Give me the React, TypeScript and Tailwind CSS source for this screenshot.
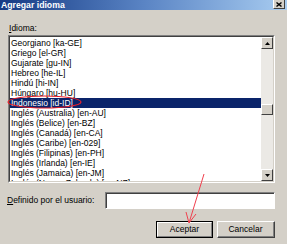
import React from 'react';

// Classic Windows "Agregar idioma" dialog, cropped screenshot with red annotations.

const languages = [
  'Georgiano [ka-GE]',
  'Griego [el-GR]',
  'Gujarate [gu-IN]',
  'Hebreo [he-IL]',
  'Hindú [hi-IN]',
  'Húngaro [hu-HU]',
  'Indonesio [id-ID]',
  'Inglés (Australia) [en-AU]',
  'Inglés (Belice) [en-BZ]',
  'Inglés (Canadá) [en-CA]',
  'Inglés (Caribe) [en-029]',
  'Inglés (Filipinas) [en-PH]',
  'Inglés (Irlanda) [en-IE]',
  'Inglés (Jamaica) [en-JM]',
  'Inglés (Nueva Zelanda) [en-NZ]',
];

const SELECTED = 'Indonesio [id-ID]';

const ScrollButton: React.FC<{ up?: boolean }> = ({ up }) => (
  <div className="h-[12px] w-[12px] shrink-0 bg-[#d4d0c8] border-t border-l border-t-white border-l-white border-r border-b border-r-[#404040] border-b-[#404040] flex items-center justify-center">
    <svg width="5" height="3" viewBox="0 0 5 3">
      {up ? <polygon points="2.5,0 5,3 0,3" fill="#000" /> : <polygon points="0,0 5,0 2.5,3" fill="#000" />}
    </svg>
  </div>
);

const App: React.FC = () => {
  return (
    <div className="relative w-[287px] h-[244px] overflow-hidden bg-[#d4d0c8] flex flex-col font-['Liberation_Sans',Arial,sans-serif] text-[8.5px] text-black">
      {/* title bar */}
      <div className="h-[10px] shrink-0 flex items-center justify-between pl-[1px] pr-[2px] bg-gradient-to-r from-[#163a84] via-[#5a84c4] to-[#a8ccf0]">
        <span className="font-bold text-white text-[8.7px] leading-none">Agregar idioma</span>
        <div className="h-[9px] w-[12px] self-start bg-[#d4d0c8] border-r border-b border-r-[#404040] border-b-[#404040] border-l border-l-white flex items-center justify-center">
          <svg width="6" height="5" viewBox="0 0 6 5">
            <path d="M0.5 0.5 L5.5 4.5 M5.5 0.5 L0.5 4.5" stroke="#000" strokeWidth="1.4" />
          </svg>
        </div>
      </div>

      {/* label */}
      <div className="mt-[13px] pl-[9px] h-[10px] leading-[10px]">
        <span className="underline">I</span>dioma:
      </div>

      {/* list box */}
      <div className="mt-[2px] ml-[8px] w-[267px] h-[148px] shrink-0 border-t border-l border-t-[#808080] border-l-[#808080] border-r border-b border-r-white border-b-white">
        <div className="h-full w-full border-t border-l border-t-[#404040] border-l-[#404040] border-r border-b border-r-[#d4d0c8] border-b-[#d4d0c8] flex">
          <div className="flex-1 bg-white overflow-hidden pt-[1px]">
            {languages.map((lang) => (
              <div
                key={lang}
                className={
                  lang === SELECTED
                    ? 'h-[10px] leading-[10px] pl-[1px] whitespace-nowrap bg-[#0a246a] text-white'
                    : 'h-[10px] leading-[10px] pl-[1px] whitespace-nowrap'
                }
              >
                {lang}
              </div>
            ))}
          </div>
          <div className="w-[12px] flex flex-col bg-[#ebe9e5]">
            <ScrollButton up />
            <div className="flex-1 pt-[55px]">
              <div className="h-[11px] w-[12px] bg-[#d4d0c8] border-t border-l border-t-white border-l-white border-r border-b border-r-[#404040] border-b-[#404040]" />
            </div>
            <ScrollButton />
          </div>
        </div>
      </div>

      {/* user defined */}
      <div className="mt-[9px] pl-[7px] pr-[12px] flex items-center">
        <div className="w-[98px] shrink-0">
          <span className="underline">D</span>efinido por el usuario:
        </div>
        <div className="flex-1 h-[17px] bg-white border-t border-l border-t-[#808080] border-l-[#808080] border-r border-b border-r-white border-b-white">
          <div className="h-full w-full border-t border-l border-t-[#404040] border-l-[#404040]" />
        </div>
      </div>

      {/* buttons */}
      <div className="mt-[12px] pr-[12px] flex justify-end gap-[4px]">
        <div className="w-[57px] h-[17px] border border-black">
          <div className="h-full w-full border-t border-l border-t-white border-l-white border-r border-b border-r-[#808080] border-b-[#808080] flex items-center justify-center">
            Aceptar
          </div>
        </div>
        <div className="w-[58px] h-[17px] border-t border-l border-t-white border-l-white border-r border-b border-r-[#404040] border-b-[#404040]">
          <div className="h-full w-full border-r border-b border-r-[#808080] border-b-[#808080] flex items-center justify-center">
            Cancelar
          </div>
        </div>
      </div>

      {/* red annotations drawn over the dialog */}
      <svg className="absolute inset-0 pointer-events-none" width="287" height="244" viewBox="0 0 287 244">
        <ellipse cx="44.5" cy="102" rx="36.5" ry="6" fill="none" stroke="#e8202c" strokeWidth="1.2" />
        <path d="M204 174 L189 223 M189 223 L186 212 M189 223 L196 214" fill="none" stroke="#f0404e" strokeWidth="1" />
      </svg>
    </div>
  );
};

export default App;
